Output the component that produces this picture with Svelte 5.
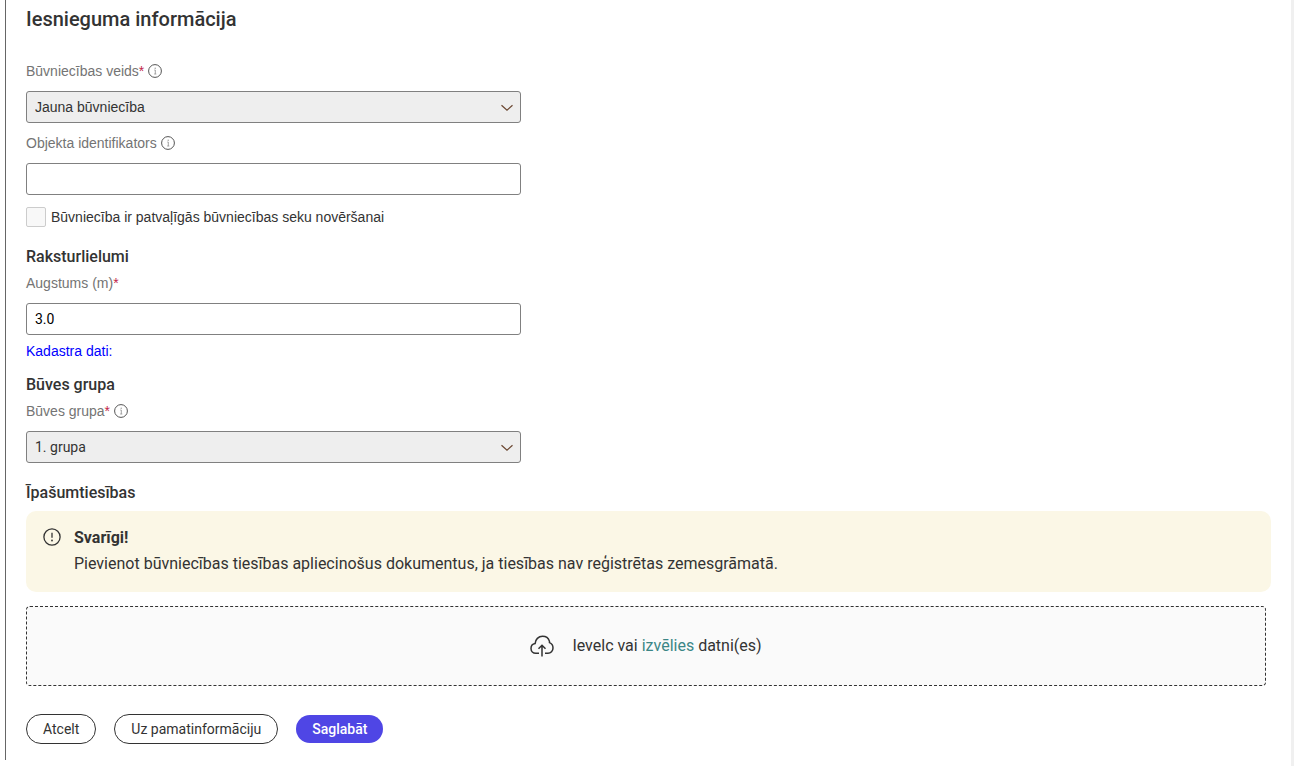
<script lang="ts">
	let buildType = $state('new');
	let objectId = $state('');
	let arbitrary = $state(false);
	let height = $state('3.0');
	let group = $state('1');

	let fileInput: HTMLInputElement;

	function openFiles(event: MouseEvent) {
		event.preventDefault();
		fileInput.click();
	}
</script>

{#snippet infoIcon()}
	<svg class="info" viewBox="0 0 14 14" aria-hidden="true">
		<circle cx="7" cy="7" r="6.4" fill="none" stroke="#555" stroke-width="1" />
		<path d="M6.300 6H7.300v4M6.200 10h2.100" fill="none" stroke="#999" stroke-width="0.9" />
		<circle cx="7.200" cy="4.200" r="0.7" fill="#999" />
	</svg>
{/snippet}

{#snippet chevron()}
	<svg class="chevron" viewBox="0 0 12 8" aria-hidden="true">
		<path d="M0.5 1.2 6 6.2l5.500-5" fill="none" stroke="#6a4630" stroke-width="1.2" />
	</svg>
{/snippet}

<main class="page">
	<form class="panel" onsubmit={(e) => e.preventDefault()}>
		<h1>Iesnieguma informācija</h1>

		<div class="field">
			<div class="label-row">
				<label for="build-type">Būvniecības veids<span class="required">*</span></label>
				{@render infoIcon()}
			</div>
			<div class="select">
				<select id="build-type" bind:value={buildType}>
					<option value="new">Jauna būvniecība</option>
				</select>
				{@render chevron()}
			</div>
		</div>

		<div class="field">
			<div class="label-row">
				<label for="object-id">Objekta identifikators</label>
				{@render infoIcon()}
			</div>
			<input id="object-id" class="text" type="text" bind:value={objectId} />
		</div>

		<div class="check">
			<input id="arbitrary" type="checkbox" bind:checked={arbitrary} />
			<label for="arbitrary">Būvniecība ir patvaļīgās būvniecības seku novēršanai</label>
		</div>

		<h2>Raksturlielumi</h2>
		<div class="field tight">
			<div class="label-row">
				<label for="height">Augstums (m)<span class="required">*</span></label>
			</div>
			<input id="height" class="text" type="text" bind:value={height} />
		</div>
		<p class="cadastre">Kadastra dati:</p>

		<h2>Būves grupa</h2>
		<div class="field">
			<div class="label-row">
				<label for="group">Būves grupa<span class="required">*</span></label>
				{@render infoIcon()}
			</div>
			<div class="select">
				<select id="group" class="roboto" bind:value={group}>
					<option value="1">1. grupa</option>
				</select>
				{@render chevron()}
			</div>
		</div>

		<h2 class="ownership">Īpašumtiesības</h2>
		<div class="notice">
			<svg class="warning" viewBox="0 0 18 18" aria-hidden="true">
				<circle cx="9" cy="9" r="8.1" fill="none" stroke="#333" stroke-width="1.3" />
				<path d="M9 4.800v5" stroke="#333" stroke-width="1.3" />
				<circle cx="9" cy="12.500" r="0.9" fill="#333" />
			</svg>
			<div>
				<strong>Svarīgi!</strong>
				<p>Pievienot būvniecības tiesības apliecinošus dokumentus, ja tiesības nav reģistrētas zemesgrāmatā.</p>
			</div>
		</div>

		<div class="dropzone">
			<svg class="cloud" viewBox="0 0 24 22" aria-hidden="true">
				<path
					d="M9 18.300H5.800C3 18.300 1 16.300 1 13.500c0-2.500 1.700-4.500 4.100-4.900C5.300 4.500 8.500 1.200 12.500 1.200c3.300 0 6 1.900 6.900 4.900.1.500.2 1 .1 1.500 2.100.8 3.500 2.900 3.500 5.300 0 3-2.200 5.400-5 5.400h-3"
					fill="none"
					stroke="#333"
					stroke-width="1.5"
				/>
				<path d="M12 21.500V10.500M8.500 13.800 12 10.300l3.500 3.500" fill="none" stroke="#333" stroke-width="1.5" />
			</svg>
			<span>Ievelc vai <a href="#files" onclick={openFiles}>izvēlies</a> datni(es)</span>
			<input bind:this={fileInput} type="file" multiple hidden aria-label="Datnes" />
		</div>

		<div class="actions">
			<button type="button">Atcelt</button>
			<button type="button">Uz pamatinformāciju</button>
			<button type="submit" class="primary">Saglabāt</button>
		</div>
	</form>
</main>

<style>
	:global(body) {
		margin: 0;
		background: #fff;
	}

	.page {
		box-sizing: border-box;
		min-height: 100vh;
		padding: 0 0 6px 5px;
		border-right: 3px solid #f0f0f0;
		font-family: 'Liberation Sans', Arial, sans-serif;
		font-size: 14px;
		line-height: 20px;
		color: #333;
	}

	.panel {
		padding: 7px 20px 16px;
		border-left: 1px solid #666;
	}

	h1,
	h2,
	p {
		margin: 0;
	}

	h1,
	h2 {
		font-family: Roboto, sans-serif;
		font-weight: 500;
		line-height: 24px;
	}

	h1 {
		margin-bottom: 30px;
		font-size: 20px;
	}

	h2 {
		margin: 12px 0 4px;
		font-size: 16px;
	}

	.field {
		max-width: 495px;
		margin-bottom: 10px;
	}

	.field.tight {
		margin-bottom: 6px;
	}

	.label-row {
		display: flex;
		align-items: center;
		gap: 4px;
		margin-bottom: 10px;
		color: #747474;
	}

	.required {
		color: #c2254a;
	}

	.info {
		width: 14px;
		height: 14px;
	}

	.text,
	select {
		display: block;
		box-sizing: border-box;
		width: 100%;
		height: 32px;
		padding: 0 8px;
		border: 1px solid #808080;
		border-radius: 3px;
		background: #fff;
		color: #000;
		font: inherit;
	}

	.text,
	.roboto {
		font-family: Roboto, sans-serif;
	}

	.select {
		position: relative;
	}

	select {
		appearance: none;
		background: #eee;
		color: #333;
	}

	.chevron {
		position: absolute;
		top: 13px;
		right: 8px;
		width: 12px;
		height: 8px;
		pointer-events: none;
	}

	.check {
		display: flex;
		align-items: center;
		gap: 5px;
		margin: 12px 0 18px;
	}

	.check input {
		appearance: none;
		box-sizing: border-box;
		width: 20px;
		height: 20px;
		margin: 0;
		border: 1px solid #ccc;
		border-radius: 2px;
		background: #f8f8f8;
	}

	.check input:checked {
		background: #4f46e5;
	}

	.cadastre {
		color: #00f;
	}

	.ownership {
		margin: 18px 0 6px;
	}

	.notice {
		display: flex;
		gap: 13px;
		padding: 14px 17px 15px;
		border-radius: 10px;
		background: #fbf7e6;
		font-family: Roboto, sans-serif;
		font-size: 16px;
		line-height: 26px;
	}

	.notice strong {
		font-weight: 700;
	}

	.warning {
		flex: none;
		width: 18px;
		height: 18px;
		margin-top: 3px;
	}

	.dropzone {
		display: flex;
		align-items: center;
		justify-content: center;
		gap: 18px;
		box-sizing: border-box;
		min-height: 80px;
		margin: 14px 5px 28px 0;
		border: 1px dashed #333;
		border-radius: 4px;
		background: #fafafa;
		font-family: Roboto, sans-serif;
		font-size: 16px;
	}

	.dropzone a {
		color: #3b8686;
		text-decoration: none;
	}

	.cloud {
		width: 24px;
		height: 22px;
	}

	.actions {
		display: flex;
		align-items: center;
		gap: 18px;
	}

	button {
		height: 30px;
		padding: 0 16px;
		border: 1px solid #333;
		border-radius: 15px;
		background: #fff;
		color: #333;
		font-family: Roboto, sans-serif;
		font-size: 14px;
		line-height: 28px;
		cursor: pointer;
	}

	.primary {
		height: 28px;
		border: 0;
		background: #4f46e5;
		color: #fff;
		font-weight: 500;
	}
</style>
